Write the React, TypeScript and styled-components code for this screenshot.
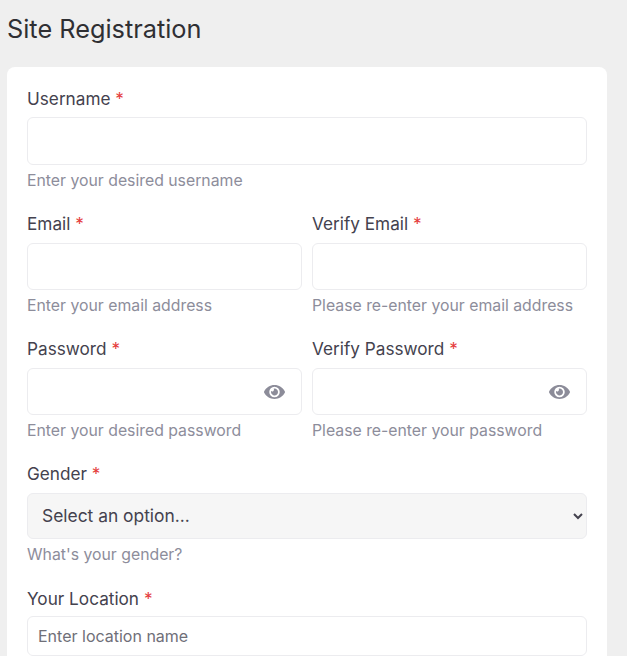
import styled, { createGlobalStyle } from 'styled-components';
import { FaEye } from 'react-icons/fa';

const GlobalStyle = createGlobalStyle`
  html, body {
    margin: 0;
    height: 656px;
    overflow: hidden;
    background: #efefef;
  }
  * {
    box-sizing: border-box;
  }
`;

type FieldProps = {
  label: string;
  help: string;
  eye?: boolean;
  type?: string;
};

const Field = ({ label, help, eye, type = 'text' }: FieldProps) => (
  <FieldWrapper>
    <Label>
      {label} <Required>*</Required>
    </Label>
    <InputWrapper>
      <Input type={type} />
      {eye && (
        <EyeButton>
          <FaEye />
        </EyeButton>
      )}
    </InputWrapper>
    <Help>{help}</Help>
  </FieldWrapper>
);

const App = () => (
  <Page>
    <GlobalStyle />
    <Title>Site Registration</Title>
    <Card>
      <Field label='Username' help='Enter your desired username' />
      <Row>
        <Field label='Email' help='Enter your email address' />
        <Field label='Verify Email' help='Please re-enter your email address' />
      </Row>
      <Row>
        <Field label='Password' help='Enter your desired password' type='password' eye />
        <Field label='Verify Password' help='Please re-enter your password' type='password' eye />
      </Row>
      <FieldWrapper>
        <RaisedLabel>
          Gender <Required>*</Required>
        </RaisedLabel>
        <Select defaultValue=''>
          <option value=''>Select an option...</option>
          <option value='f'>Female</option>
          <option value='m'>Male</option>
        </Select>
        <Help>What's your gender?</Help>
      </FieldWrapper>
      <FieldWrapper>
        <RaisedLabel>
          Your Location <Required>*</Required>
        </RaisedLabel>
        <LocationInput type='text' placeholder='Enter location name' />
      </FieldWrapper>
    </Card>
  </Page>
);

const Page = styled.div`
  padding: 0 20px 0 7px;
  font-family: Inter, 'Liberation Sans', sans-serif;
  color: #44424e;
`;

const Title = styled.h1`
  margin: 0;
  padding-top: 13px;
  height: 67px;
  font-size: 25.3px;
  line-height: 32px;
  font-weight: 400;
  color: #2f2f33;
`;

const Card = styled.div`
  background: #fff;
  border-radius: 8px;
  padding: 20px 20px 40px;
  display: flex;
  flex-direction: column;
`;

const Row = styled.div`
  display: grid;
  grid-template-columns: 1fr 1fr;
  column-gap: 10px;
`;

const FieldWrapper = styled.div`
  display: flex;
  flex-direction: column;
  height: 125.2px;
  min-width: 0;
`;

const Label = styled.label`
  font-size: 17.2px;
  line-height: 24px;
  margin-bottom: 6.4px;
`;

const RaisedLabel = styled(Label)`
  margin-top: -1px;
  margin-bottom: 7.4px;
`;

const Required = styled.span`
  color: #e53e3e;
`;

const InputWrapper = styled.div`
  position: relative;
`;

const Input = styled.input`
  display: block;
  width: 100%;
  height: 47.6px;
  border: 1px solid #ececef;
  border-radius: 6px;
  background: #fff;
  outline: none;
`;

const EyeButton = styled.span`
  position: absolute;
  top: 50%;
  right: 17px;
  transform: translateY(-50%);
  display: flex;
  color: #8c8c99;
  font-size: 21px;
`;

const Help = styled.div`
  margin-top: 5px;
  font-size: 15.8px;
  line-height: 22px;
  color: #8d8d9b;
`;

const Select = styled.select`
  display: block;
  width: 100%;
  height: 46px;
  padding: 0 10px;
  border: 1px solid #ececef;
  border-radius: 6px;
  background: #f6f6f6;
  font-family: inherit;
  font-size: 17.4px;
  color: #44424e;
  outline: none;
`;

const LocationInput = styled(Input)`
  height: 40px;
  margin-top: -2px;
  padding: 0 10px;
  font-family: inherit;
  font-size: 16px;

  &::placeholder {
    color: #6f6f78;
    opacity: 1;
  }
`;

export default App;
